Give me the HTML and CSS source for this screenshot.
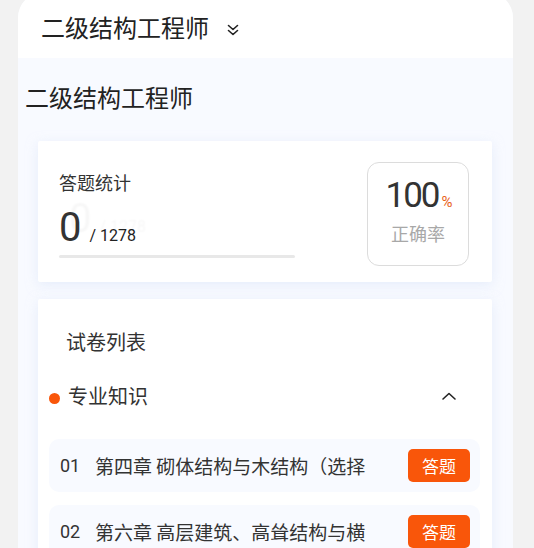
FILE: index.html
```html
<!DOCTYPE html>
<html lang="zh-CN">
<head>
    <meta charset="UTF-8">
    <meta name="viewport" content="width=device-width, initial-scale=1.0">
    <title>二级结构工程师</title>
    <link rel="stylesheet" href="styles.css">
</head>
<body>

    <div class="panel">
        <div class="topbar">
            <span class="topbar-title">二级结构工程师</span>
            <svg class="topbar-icon" width="14" height="14" viewBox="0 0 14 14" fill="none" stroke="#222" stroke-width="1.6" stroke-linecap="round" stroke-linejoin="round">
                <polyline points="2.5,2.5 7,6.5 11.5,2.5"></polyline>
                <polyline points="2.5,7.5 7,11.5 11.5,7.5"></polyline>
            </svg>
        </div>

        <div class="content">
            <h2 class="page-title">二级结构工程师</h2>

            <div class="card stats">
                <div class="stats-left">
                    <div class="stats-label">答题统计</div>
                    <div class="stats-num">
                        <span class="done">0</span><span class="total">/ 1278</span>
                    </div>
                    <div class="progress"><div class="progress-fill" style="width: 0%"></div></div>
                </div>
                <div class="rate-box">
                    <div class="rate-value">100<span class="rate-unit">%</span></div>
                    <div class="rate-label">正确率</div>
                </div>
            </div>

            <div class="card papers">
                <div class="papers-title">试卷列表</div>

                <div class="group-head">
                    <span class="dot"></span>
                    <span class="group-name">专业知识</span>
                    <svg class="group-arrow" width="16" height="10" viewBox="0 0 16 10" fill="none" stroke="#222" stroke-width="1.6" stroke-linecap="round" stroke-linejoin="round">
                        <polyline points="2,8 8,2.5 14,8"></polyline>
                    </svg>
                </div>

                <div class="paper-list">
                    <div class="paper-row">
                        <span class="paper-no">01</span>
                        <span class="paper-name">第四章 砌体结构与木结构（选择</span>
                        <button class="paper-btn">答题</button>
                    </div>
                    <div class="paper-row">
                        <span class="paper-no">02</span>
                        <span class="paper-name">第六章 高层建筑、高耸结构与横</span>
                        <button class="paper-btn">答题</button>
                    </div>
                </div>
            </div>
        </div>
    </div>

</body>
</html>
```

FILE: styles.css
```css
body {
    margin: 0;
    padding: 0;
    background: #f2f2f2;
    font-family: Roboto, "Noto Sans CJK SC", sans-serif;
    color: #333;
    overflow: hidden;
}

.panel {
    margin: -8px 21px 0 18px;
    border-radius: 26px 26px 0 0;
    overflow: hidden;
    background: #f8faff;
    min-height: 600px;
}

.topbar {
    height: 66px;
    box-sizing: border-box;
    padding: 8px 0 0 23px;
    background: #fff;
    display: flex;
    align-items: center;
}

.topbar-title {
    font-size: 24px;
    line-height: 32px;
    color: #222;
}

.topbar-icon {
    margin-left: 17px;
    margin-top: 2px;
}

.content {
    padding: 0 21px 0 20px;
}

.page-title {
    margin: 25px 0 26px -13px;
    font-size: 24px;
    line-height: 32px;
    font-weight: normal;
    color: #222;
}

.card {
    background: #fff;
    border-radius: 2px;
    box-shadow: 0 3px 12px rgba(215, 226, 245, 0.55);
}

/* Stats card */
.stats {
    height: 141px;
    box-sizing: border-box;
    padding: 0 23px 0 21px;
    display: flex;
    align-items: center;
    justify-content: space-between;
}

.stats-left {
    width: 236px;
    margin-top: 7px;
}

.stats-label {
    font-size: 18px;
    line-height: 24px;
    color: #333;
}

.stats-num {
    margin-top: 8px;
    height: 48px;
    line-height: 48px;
    white-space: nowrap;
    text-shadow: 10px -9px 2px rgba(0, 0, 0, 0.035);
}

.done {
    font-size: 40px;
    color: #333;
    letter-spacing: -1px;
}

.total {
    font-size: 16px;
    margin-left: 9px;
    color: #222;
}

.progress {
    margin-top: 3px;
    height: 3px;
    background: #e8e8e8;
    border-radius: 2px;
}

.progress-fill {
    height: 100%;
    background: #f9560a;
}

.rate-box {
    width: 102px;
    height: 104px;
    margin-top: 5px;
    box-sizing: border-box;
    border: 1px solid #dcdcdc;
    border-radius: 12px;
    display: flex;
    flex-direction: column;
    align-items: center;
    padding-top: 13px;
}

.rate-value {
    font-size: 35px;
    line-height: 40px;
    letter-spacing: -2px;
    color: #333;
    margin-left: 2px;
}

.rate-unit {
    font-size: 15px;
    letter-spacing: 0;
    margin-left: 3px;
    color: #e8621c;
}

.rate-label {
    margin-top: 1px;
    font-size: 18px;
    line-height: 24px;
    color: #a8a8a8;
}

/* Paper list card */
.papers {
    margin-top: 17px;
    padding: 30px 12px 20px 11px;
}

.papers-title {
    padding-left: 17px;
    font-size: 20px;
    line-height: 28px;
    color: #333;
}

.group-head {
    margin-top: 20px;
    height: 40px;
    display: flex;
    align-items: center;
    padding-right: 23px;
}

.dot {
    width: 11px;
    height: 11px;
    border-radius: 50%;
    background: #f9560a;
    margin-top: 2px;
}

.group-name {
    margin-left: 8px;
    font-size: 20px;
    line-height: 28px;
    color: #333;
    flex: 1;
}

.group-arrow {
    margin-top: -2px;
}

.paper-list {
    margin-top: 22px;
    display: flex;
    flex-direction: column;
    gap: 13px;
}

.paper-row {
    height: 53px;
    box-sizing: border-box;
    padding: 0 10px 0 11px;
    background: #f8faff;
    border-radius: 10px;
    display: flex;
    align-items: center;
}

.paper-no {
    width: 35px;
    font-size: 18px;
    color: #333;
}

.paper-name {
    width: 280px;
    line-height: 28px;
    white-space: nowrap;
    overflow: hidden;
    font-size: 19px;
    color: #333;
    font-family: "Noto Sans CJK SC", sans-serif;
}

.paper-btn {
    margin-left: auto;
    width: 62px;
    height: 33px;
    border: none;
    border-radius: 5px;
    background: #f9560a;
    color: #fff;
    font-size: 17px;
    font-family: "Noto Sans CJK SC", sans-serif;
    padding: 0;
    cursor: pointer;
}
```
